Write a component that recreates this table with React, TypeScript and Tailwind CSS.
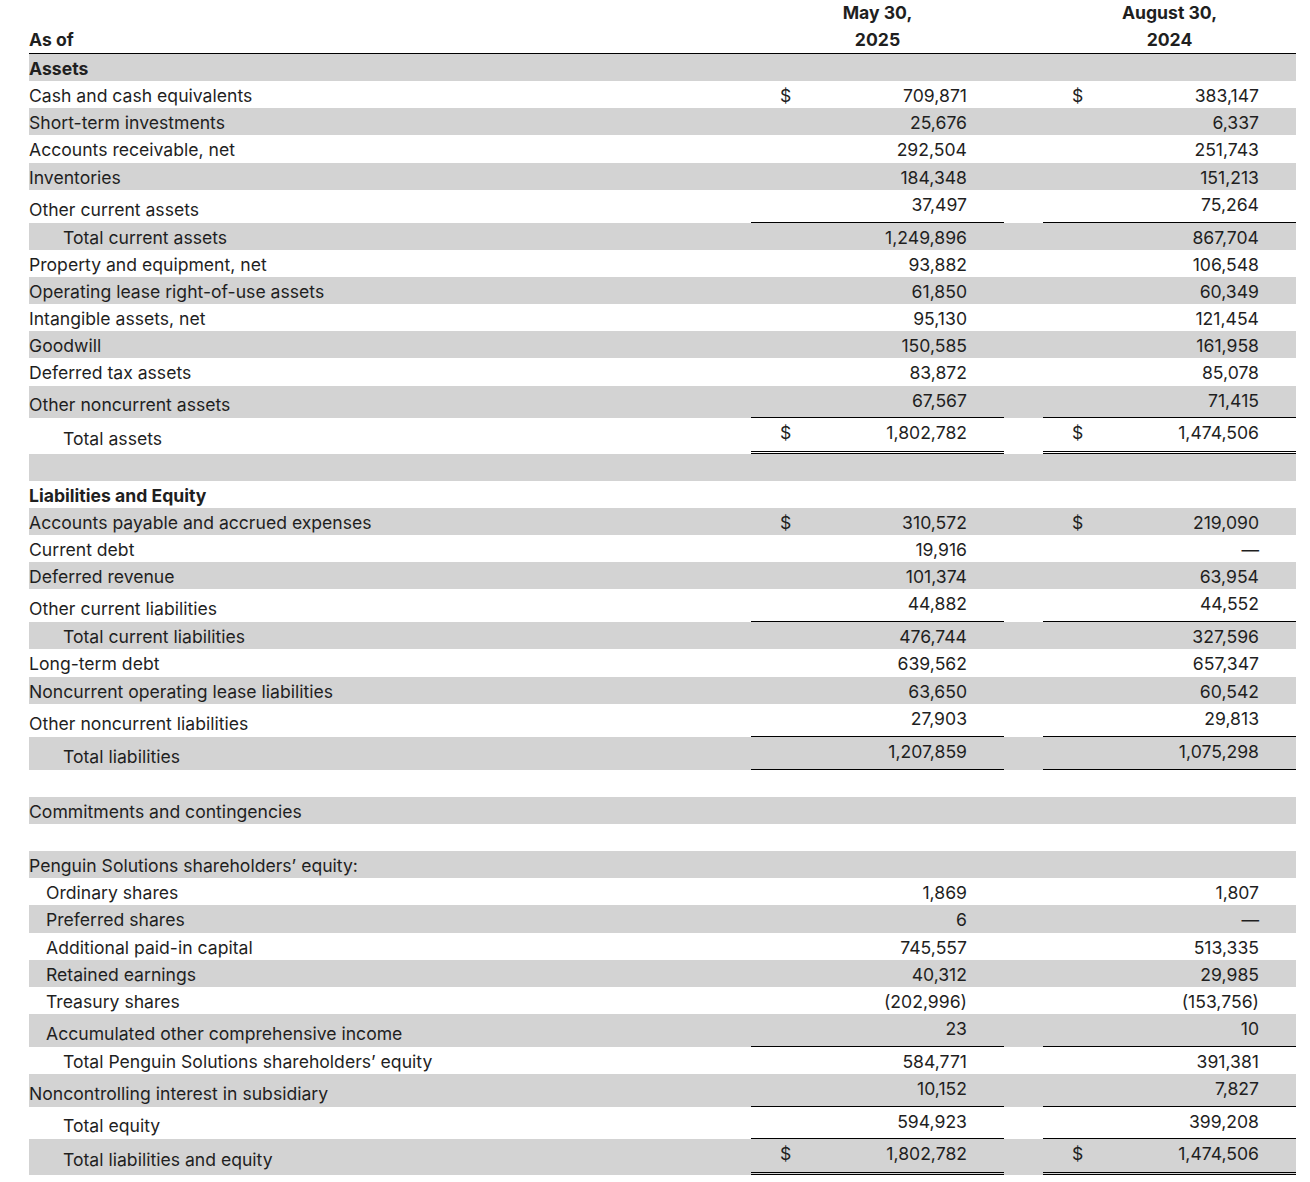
import React from "react";
import clsx from "clsx";

type Row = {
  label?: string;
  indent?: 0 | 1 | 2;
  bold?: boolean;
  gray?: boolean;
  v?: [string, string];
  dollar?: boolean;
  line?: "single" | "double";
  h?: string;
};

const rows: Row[] = [
  { label: "Assets", bold: true, gray: true },
  { label: "Cash and cash equivalents", v: ["709,871", "383,147"], dollar: true },
  { label: "Short-term investments", v: ["25,676", "6,337"], gray: true },
  { label: "Accounts receivable, net", v: ["292,504", "251,743"] },
  { label: "Inventories", v: ["184,348", "151,213"], gray: true },
  { label: "Other current assets", v: ["37,497", "75,264"], line: "single", h: "h-[33px]" },
  { label: "Total current assets", indent: 2, v: ["1,249,896", "867,704"], gray: true },
  { label: "Property and equipment, net", v: ["93,882", "106,548"] },
  { label: "Operating lease right-of-use assets", v: ["61,850", "60,349"], gray: true },
  { label: "Intangible assets, net", v: ["95,130", "121,454"] },
  { label: "Goodwill", v: ["150,585", "161,958"], gray: true },
  { label: "Deferred tax assets", v: ["83,872", "85,078"] },
  { label: "Other noncurrent assets", v: ["67,567", "71,415"], gray: true, line: "single", h: "h-[32px]" },
  { label: "Total assets", indent: 2, v: ["1,802,782", "1,474,506"], dollar: true, line: "double", h: "h-[36px]" },
  { gray: true },
  { label: "Liabilities and Equity", bold: true },
  { label: "Accounts payable and accrued expenses", v: ["310,572", "219,090"], dollar: true, gray: true },
  { label: "Current debt", v: ["19,916", "—"] },
  { label: "Deferred revenue", v: ["101,374", "63,954"], gray: true },
  { label: "Other current liabilities", v: ["44,882", "44,552"], line: "single", h: "h-[33px]" },
  { label: "Total current liabilities", indent: 2, v: ["476,744", "327,596"], gray: true },
  { label: "Long-term debt", v: ["639,562", "657,347"] },
  { label: "Noncurrent operating lease liabilities", v: ["63,650", "60,542"], gray: true },
  { label: "Other noncurrent liabilities", v: ["27,903", "29,813"], line: "single", h: "h-[33px]" },
  { label: "Total liabilities", indent: 2, v: ["1,207,859", "1,075,298"], gray: true, line: "single", h: "h-[33px]" },
  {},
  { label: "Commitments and contingencies", gray: true },
  {},
  { label: "Penguin Solutions shareholders’ equity:", gray: true },
  { label: "Ordinary shares", indent: 1, v: ["1,869", "1,807"] },
  { label: "Preferred shares", indent: 1, v: ["6", "—"], gray: true },
  { label: "Additional paid-in capital", indent: 1, v: ["745,557", "513,335"] },
  { label: "Retained earnings", indent: 1, v: ["40,312", "29,985"], gray: true },
  { label: "Treasury shares", indent: 1, v: ["(202,996)", "(153,756)"] },
  { label: "Accumulated other comprehensive income", indent: 1, v: ["23", "10"], gray: true, line: "single", h: "h-[33px]" },
  { label: "Total Penguin Solutions shareholders’ equity", indent: 2, v: ["584,771", "391,381"] },
  { label: "Noncontrolling interest in subsidiary", v: ["10,152", "7,827"], gray: true, line: "single", h: "h-[33px]" },
  { label: "Total equity", indent: 2, v: ["594,923", "399,208"], line: "single", h: "h-[32px]" },
  { label: "Total liabilities and equity", indent: 2, v: ["1,802,782", "1,474,506"], dollar: true, gray: true, line: "double", h: "h-[36px]" },
];

const indents = ["pl-0", "pl-[17px]", "pl-[34px]"];

function NumCell({ value, dollar, line }: { value?: string; dollar?: boolean; line?: Row["line"] }) {
  return (
    <div
      className={clsx(
        "w-[253px] flex items-start justify-between pt-px pl-[29px] pr-[37px] leading-[27px]",
        line === "single" && "border-b border-black",
        line === "double" && "border-b-[3px] border-double border-black"
      )}
    >
      <span>{dollar ? "$" : ""}</span>
      <span>{value}</span>
    </div>
  );
}

function TableRow({ row }: { row: Row }) {
  const tall = !!row.line;
  return (
    <div className={clsx("flex", row.h ?? "h-[27.15px]", row.gray && "bg-[#d3d3d3]")}>
      <div
        className={clsx(
          "w-[722px] flex leading-[27px] whitespace-nowrap",
          tall ? "items-end" : "items-start pt-px",
          row.line === "double" && "pb-[2px]",
          indents[row.indent ?? 0],
          row.bold && "font-bold"
        )}
      >
        {row.label}
      </div>
      {row.v ? (
        <>
          <NumCell value={row.v[0]} dollar={row.dollar} line={row.line} />
          <div className="w-[39px]" />
          <NumCell value={row.v[1]} dollar={row.dollar} line={row.line} />
        </>
      ) : null}
    </div>
  );
}

export default function App() {
  return (
    <div className="bg-white min-h-[1182px] pl-[29px] text-[17.6px] text-[#1f1f1f] font-['Inter',sans-serif]">
      <div className="w-[1267px]">
        <div className="flex h-[54px] border-b border-black font-bold leading-[26.5px]">
          <div className="w-[722px] flex items-end">As of</div>
          <div className="w-[253px] flex flex-col items-center">
            <span>May 30,</span>
            <span>2025</span>
          </div>
          <div className="w-[39px]" />
          <div className="w-[253px] flex flex-col items-center">
            <span>August 30,</span>
            <span>2024</span>
          </div>
        </div>
        {rows.map((row, i) => (
          <TableRow key={i} row={row} />
        ))}
      </div>
    </div>
  );
}
